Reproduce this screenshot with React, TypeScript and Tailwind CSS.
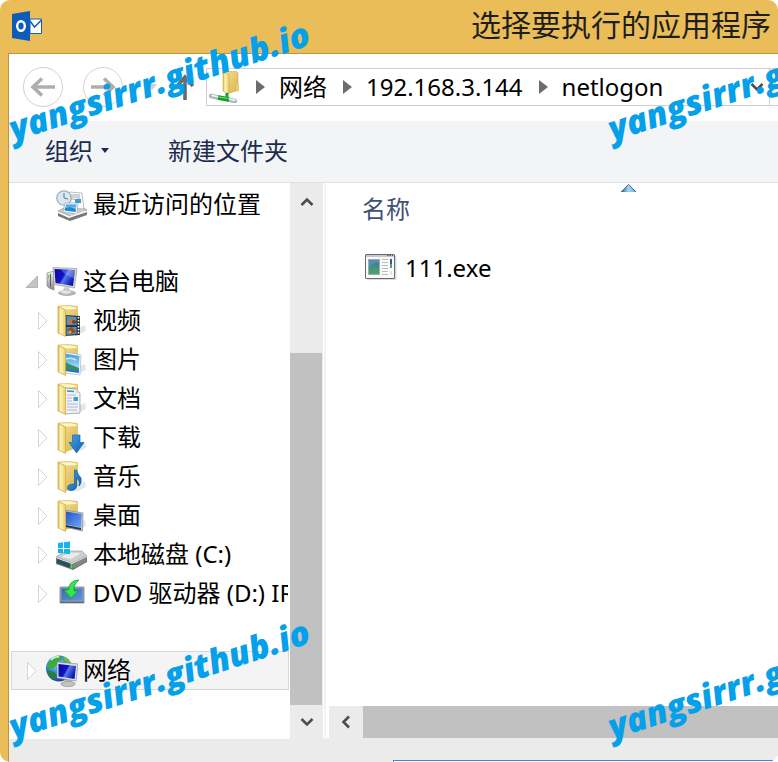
import type { ReactNode } from "react";

const uiFont = "font-['Noto_Sans','Noto_Sans_CJK_SC',sans-serif]";

function Gradients() {
  return (
    <svg width="0" height="0" className="absolute" aria-hidden="true">
      <defs>
        <linearGradient id="flap" x1="0" y1="0" x2="1" y2="0">
          <stop offset="0" stopColor="#dcb548" />
          <stop offset="0.35" stopColor="#fdf3b8" />
          <stop offset="1" stopColor="#ecce6c" />
        </linearGradient>
        <linearGradient id="back" x1="0" y1="0" x2="1" y2="1">
          <stop offset="0" stopColor="#f4e294" />
          <stop offset="1" stopColor="#d9b34c" />
        </linearGradient>
        <linearGradient id="screen" x1="0" y1="0" x2="1" y2="0.5">
          <stop offset="0" stopColor="#0a0a9c" />
          <stop offset="0.5" stopColor="#1212c8" />
          <stop offset="0.6" stopColor="#5878e8" />
          <stop offset="1" stopColor="#0a18b4" />
        </linearGradient>
        <linearGradient id="metal" x1="0" y1="0" x2="0" y2="1">
          <stop offset="0" stopColor="#f4f4f4" />
          <stop offset="1" stopColor="#8d8d8d" />
        </linearGradient>
        <linearGradient id="sky" x1="0" y1="0" x2="0" y2="1">
          <stop offset="0" stopColor="#3d9be0" />
          <stop offset="1" stopColor="#d5effb" />
        </linearGradient>
        <linearGradient id="blue" x1="0" y1="0" x2="1" y2="1">
          <stop offset="0" stopColor="#49a5e6" />
          <stop offset="1" stopColor="#0b5cae" />
        </linearGradient>
        <linearGradient id="desk" x1="0" y1="0" x2="1" y2="1">
          <stop offset="0" stopColor="#2553c4" />
          <stop offset="1" stopColor="#6ea6f4" />
        </linearGradient>
        <linearGradient id="plate" x1="0" y1="0" x2="1" y2="1">
          <stop offset="0" stopColor="#3a6aa8" />
          <stop offset="1" stopColor="#5f97de" />
        </linearGradient>
        <linearGradient id="app" x1="0" y1="0" x2="0" y2="1">
          <stop offset="0" stopColor="#3d72a8" />
          <stop offset="1" stopColor="#4caa5c" />
        </linearGradient>
        <linearGradient id="sort" x1="0" y1="0" x2="1" y2="0">
          <stop offset="0" stopColor="#2c5f8c" />
          <stop offset="0.5" stopColor="#9fd4f4" />
          <stop offset="1" stopColor="#6ea8cf" />
        </linearGradient>
        <radialGradient id="globe" cx="0.4" cy="0.3" r="0.75">
          <stop offset="0" stopColor="#8fe0ff" />
          <stop offset="0.5" stopColor="#2b83d6" />
          <stop offset="1" stopColor="#14408e" />
        </radialGradient>
      </defs>
    </svg>
  );
}

function Icon({ children }: { children: ReactNode }) {
  return (
    <svg width="32" height="32" viewBox="0 0 32 32" className="shrink-0" aria-hidden="true">
      {children}
    </svg>
  );
}

function Folder({ children }: { children?: ReactNode }) {
  return (
    <Icon>
      <path d="M20 31L30 26L29 20L20 24Z" fill="#000" opacity="0.1" />
      <path d="M2 1L12 0.500L21.500 1.500V25L9 30Z" fill="url(#back)" stroke="#d9bc62" strokeWidth="0.7" />
      <path d="M4 1.500L13 1.300L20.500 2.500V4L10 4.500Z" fill="#fff8c8" />
      {children}
      <path d="M2 1.500L9.500 5V31.500L2 28Z" fill="url(#flap)" stroke="#d3ab45" strokeWidth="0.7" />
    </Icon>
  );
}

function Monitor() {
  return (
    <>
      <ellipse cx="21" cy="27" rx="9" ry="3" fill="#b5b5b5" />
      <path d="M18 20H23L24 27H17Z" fill="url(#metal)" />
      <ellipse cx="20" cy="26" rx="5" ry="1.700" fill="#e4e4e4" />
      <path d="M7 1.500L31 2.500L28.500 22L8 18.500Z" fill="#d8d8d8" stroke="#8d8d8d" strokeWidth="0.6" />
      <path d="M8.500 3L29 4L27 20L9.500 17Z" fill="url(#screen)" />
      <path d="M15 3.500L29 4L28 12Q20 11 15 3.500Z" fill="#b4c8ff" opacity="0.35" />
    </>
  );
}

const icons: Record<string, ReactNode> = {
  recent: (
    <Icon>
      <path d="M2 24L13 29L31 23V26L14 32L2 27Z" fill="#777" />
      <path d="M2 22L14 27L31 21L24 17L8 19Z" fill="#cfcfcf" stroke="#8c8c8c" strokeWidth="0.6" />
      <path d="M13 3L26 4L28 20L14 19Z" fill="#fafafa" stroke="#9ca6ae" strokeWidth="0.7" />
      <path d="M15 6H24M15 8H24M15 10H19M21 10H24" stroke="#8d9aa5" strokeWidth="0.8" />
      <rect x="19" y="10" width="6" height="4" fill="#3a9bd0" />
      <circle cx="8" cy="9" r="7.200" fill="#d8e7f0" stroke="#9eb2bf" strokeWidth="1.300" />
      <path d="M8 4V9L12 10" stroke="#617684" strokeWidth="1" fill="none" />
      <path d="M9 14L22 14L21 25L7 23Z" fill="#f5f9fc" stroke="#8ba1b0" strokeWidth="0.6" />
      <path d="M10 15.500L20.500 15.500L19.500 23L8.500 21.500Z" fill="url(#sky)" />
      <path d="M9 19L14 18L20 20L19.500 23L8.500 21.500Z" fill="#1d8ad1" />
      <path d="M12 28L29 22" stroke="#eee" strokeWidth="1" />
    </Icon>
  ),
  pc: (
    <Icon>
      <path d="M1 7L8 5V24L3 22L1 20Z" fill="url(#metal)" stroke="#777" strokeWidth="0.6" />
      <path d="M2.500 9V12" stroke="#47e034" strokeWidth="1.300" />
      <path d="M4.500 8V21" stroke="#5e5e5e" />
      <Monitor />
    </Icon>
  ),
  video: (
    <Folder>
      <path d="M9 10L24 11V30L9 31Z" fill="#34332f" />
      <path d="M10.500 11L20.500 12V20L10.500 20Z" fill="#3e9acb" />
      <path d="M10.500 22H20.500V29L10.500 30Z" fill="#3e9acb" />
      <circle cx="15" cy="16" r="2.500" fill="#e36a2c" />
      <circle cx="18" cy="17" r="2" fill="#77402a" />
      <path d="M11 24L16 22L20 27L14 29Z" fill="#a5452a" />
      <circle cx="14" cy="27" r="1.500" fill="#e5a52f" />
      <path d="M22.500 12V30" stroke="#fff" strokeWidth="1.500" strokeDasharray="1.500 1.500" />
    </Folder>
  ),
  picture: (
    <Folder>
      <path d="M9 8L25 11L24 31L9 29Z" fill="#fff" stroke="#a5b6c2" strokeWidth="0.7" />
      <path d="M9 9.500L23.500 12L23 29L9 27Z" fill="url(#sky)" />
      <path d="M9 18Q15 21 23 24L23 26L9 27Z" fill="#3c8b6e" />
      <path d="M9 25L23 26V29L9 27Z" fill="#2379b0" />
      <path d="M10 15Q15 13 20 16" stroke="#fff" strokeWidth="1.500" fill="none" opacity="0.7" />
    </Folder>
  ),
  document: (
    <Folder>
      <path d="M9 5L20 6L24 10V30L9 31Z" fill="#f0f1f9" stroke="#8b9099" strokeWidth="0.7" />
      <path d="M20 6V10L24 10Z" fill="#d2d8e2" />
      <path d="M11 8L18 8.500" stroke="#3b9a95" strokeWidth="1.500" />
      <path d="M11 12H20M11 15H16M11 18H16M11 21H22M11 24H22M11 27H21" stroke="#b4b9c9" />
      <rect x="17.500" y="14" width="4.500" height="4" fill="#37a0cf" />
    </Folder>
  ),
  download: (
    <Folder>
      <path d="M16.500 13H24V20.500H28L20.500 31L13 20.500H16.500Z" fill="url(#blue)" stroke="#1b68b4" strokeWidth="0.7" />
    </Folder>
  ),
  music: (
    <Folder>
      <path d="M18.500 9H20.500Q22 14 25 17Q26 22 23 25Q24 19 20.500 17V25Q20.500 29 16 29.500Q11.500 30 11.500 26.500Q12 23 18.500 23Z" fill="url(#blue)" stroke="#155b9e" strokeWidth="0.7" />
    </Folder>
  ),
  desktop: (
    <Folder>
      <path d="M9 10L27 13L26.500 31L9 27Z" fill="#bfc9d5" stroke="#7e8999" strokeWidth="0.7" />
      <path d="M10 11.500L25.500 14L25 27.500L10 24.500Z" fill="url(#desk)" />
      <path d="M10 25L25 28V30L10 27Z" fill="#263653" />
    </Folder>
  ),
  disk: (
    <Icon>
      <path d="M0 19L16 25L31 18V23L17 31L0 25Z" fill="#6d7476" />
      <path d="M0 18L10 12L26 12L31 17L16 24Z" fill="#cdcdcd" stroke="#969696" strokeWidth="0.6" />
      <path d="M5 18L13 13.500L25 14L15 20Z" fill="#ebebeb" />
      <path d="M1 20L14 24.500V29L1 24Z" fill="#25515a" />
      <path d="M17 25L30 18.500V22.500L18 29.500Z" fill="#858585" />
      <path d="M15.500 25V29.500" stroke="#3fe02c" strokeWidth="1.800" />
      <path d="M2 4L7 3.300V9H2ZM8 3.200L14 2.500V9H8ZM2 10H7V14.500L2 14ZM8 10H14V15.300L8 14.600Z" fill="#14b5ee" />
    </Icon>
  ),
  dvd: (
    <Icon>
      <path d="M4 9H28V25H4Z" fill="#93a2b2" stroke="#7d8897" strokeWidth="0.8" />
      <path d="M5.500 10.500H26.500V22.500H5.500Z" fill="url(#plate)" />
      <path d="M4 23.500H28V25H4Z" fill="#5c7085" />
      <path d="M23 2Q13 2 12.500 12H8L15 20L22 13H18Q17 7 23 2Z" fill="#31e84b" stroke="#149e2a" strokeWidth="0.8" />
    </Icon>
  ),
  network: (
    <Icon>
      <circle cx="13" cy="13.500" r="13" fill="url(#globe)" />
      <path d="M3 7Q8 0 15 1Q18 5 12 7Q10 13 5 14Q1 14 1 11Z" fill="#3daa3b" />
      <path d="M17 1Q24 4 25 9Q18 9 17 1Z" fill="#62c046" />
      <path d="M1 16Q7 15 10 20Q10 25 7 24Q3 22 1 16Z" fill="#277e34" />
      <path d="M5 5Q9 1 13 2" stroke="#ddffd4" strokeWidth="1.500" fill="none" />
      <path d="M19 23H25L26 29H18Z" fill="#bcbcbc" />
      <ellipse cx="22" cy="29" rx="7" ry="2.700" fill="#c2c2c2" stroke="#8a8a8a" strokeWidth="0.6" />
      <path d="M11 7L32 9L30 26L11 23Z" fill="#e0e0e0" stroke="#818181" strokeWidth="0.6" />
      <path d="M12.500 9L30 11L28.500 24L12.500 21.500Z" fill="url(#screen)" />
    </Icon>
  ),
};

function OutlookIcon() {
  return (
    <svg width="32" height="32" viewBox="0 0 32 32" aria-hidden="true">
      <path d="M18 8H29.500V22.500H18Z" fill="#fff" stroke="#1260b8" />
      <path d="M18 10L22.500 16L29.500 9" stroke="#1260b8" strokeWidth="1.500" fill="none" />
      <path d="M0 3L18 0V30L0 27Z" fill="#0c5cb8" />
      <ellipse cx="9" cy="15" rx="3.800" ry="4.800" fill="none" stroke="#fff" strokeWidth="2.400" />
    </svg>
  );
}

function ShareIcon() {
  return (
    <svg width="32" height="32" viewBox="0 0 32 32" className="shrink-0" aria-hidden="true">
      <path d="M15 1L27 0L29 2V19L21 22L15 19Z" fill="url(#back)" stroke="#cda94a" strokeWidth="0.6" />
      <path d="M14 1L20 4V23L14 20Z" fill="url(#flap)" stroke="#cda94a" strokeWidth="0.6" />
      <path d="M27 13H30V20L27 21Z" fill="#e8ca70" />
      <path d="M18 22V27" stroke="#1c9d31" strokeWidth="3" />
      <path d="M2 25L26 30" stroke="#aab9b9" strokeWidth="4.500" strokeLinecap="round" />
      <path d="M3 24.500L26 29.200" stroke="#f4fafa" strokeWidth="1.500" strokeLinecap="round" />
      <path d="M9 26.500L20 28.500" stroke="#139e2b" strokeWidth="4.500" />
      <path d="M9 26L20 27.500" stroke="#67e46d" strokeWidth="1.200" />
    </svg>
  );
}

function ExeIcon() {
  return (
    <svg width="32" height="28" viewBox="0 0 32 28" aria-hidden="true">
      <rect x="2" y="2" width="29.500" height="24" rx="1" fill="#dcdcdc" />
      <rect x="0.500" y="0.500" width="29" height="24" rx="0.500" fill="#fafafa" stroke="#646b73" />
      <path d="M1 1H29V3H1Z" fill="#c3c8d2" />
      <path d="M22 1.500H28" stroke="#586173" strokeDasharray="1.500 1" />
      <rect x="3.500" y="5.500" width="11" height="15" fill="url(#app)" stroke="#a1a9b8" />
      <path d="M4 13Q6 9 14 8.500V6H4Z" fill="#6094bd" opacity="0.7" />
      <path d="M17 5.500H23M17 8.500H23M17 11.500H23M17 14.500H23M17 17.500H23M17 20.500H23" stroke="#bcbcbc" />
      <path d="M25 5H27V10H25Z" fill="#315b9c" />
      <path d="M25 10H27V14H25Z" fill="#4caa5c" />
      <path d="M25 17H27V21H25Z" fill="#e2e2e2" />
    </svg>
  );
}

function Chevron({ dir }: { dir: "up" | "down" | "left" }) {
  const paths = {
    up: "M1.500 10L7 4.500L12.500 10",
    down: "M1.500 4L7 9.500L12.500 4",
    left: "M10 1.500L4.500 7L10 12.500",
  };
  return (
    <svg width="14" height="14" viewBox="0 0 14 14" aria-hidden="true">
      <path d={paths[dir]} fill="none" stroke="#4d4d4d" strokeWidth="2.600" />
    </svg>
  );
}

function Crumb({ children }: { children: ReactNode }) {
  return (
    <>
      <svg width="9" height="14" viewBox="0 0 9 14" className="shrink-0" aria-hidden="true">
        <path d="M0 0L9 7L0 14Z" fill="#6d6d6d" />
      </svg>
      <button className="mr-4 ml-[14px] whitespace-nowrap">{children}</button>
    </>
  );
}

function RoundArrow({ label, flip }: { label: string; flip?: boolean }) {
  return (
    <button aria-label={label} className="flex size-10 shrink-0 items-center justify-center rounded-full border border-[#d2d2d2]">
      <svg width="26" height="20" viewBox="0 0 26 20" className={flip ? "-scale-x-100" : ""} aria-hidden="true">
        <path d="M25 10H3M12 1.500L3 10L12 18.500" fill="none" stroke="#aeaeae" strokeWidth="3.600" />
      </svg>
    </button>
  );
}

type Node = { icon: string; label: string; level: 1 | 2; state: "open" | "closed" | "none"; selected?: boolean };

const groups: Node[][] = [
  [{ icon: "recent", label: "最近访问的位置", level: 2, state: "none" }],
  [
    { icon: "pc", label: "这台电脑", level: 1, state: "open" },
    { icon: "video", label: "视频", level: 2, state: "closed" },
    { icon: "picture", label: "图片", level: 2, state: "closed" },
    { icon: "document", label: "文档", level: 2, state: "closed" },
    { icon: "download", label: "下载", level: 2, state: "closed" },
    { icon: "music", label: "音乐", level: 2, state: "closed" },
    { icon: "desktop", label: "桌面", level: 2, state: "closed" },
    { icon: "disk", label: "本地磁盘 (C:)", level: 2, state: "closed" },
    { icon: "dvd", label: "DVD 驱动器 (D:) IR5_SSS", level: 2, state: "closed" },
  ],
  [{ icon: "network", label: "网络", level: 1, state: "closed", selected: true }],
];

function TreeRow({ node }: { node: Node }) {
  return (
    <li>
      <button
        className={`flex h-[39px] w-full items-center overflow-hidden border text-left ${
          node.selected ? "border-[#d6d6d6] bg-[#f4f4f4]" : "border-transparent"
        } ${node.level === 1 ? "pl-[14px]" : "pl-[25px]"}`}
      >
        <svg width="12" height="20" viewBox="0 0 12 20" className="shrink-0" aria-hidden="true">
          {node.state === "open" && <path d="M11.500 4V15.500H0Z" fill="#c4c4c4" stroke="#a9a9a9" strokeWidth="0.8" />}
          {node.state === "closed" && <path d="M1.500 1.500L10 10L1.500 18.500Z" fill="#fff" stroke="#d5d5d5" />}
        </svg>
        <span className={`flex shrink-0 ${node.level === 1 ? "mr-[5px] ml-2" : "mr-[5px] ml-[7px]"}`}>{icons[node.icon]}</span>
        <span className="pb-[2px] whitespace-nowrap">{node.label}</span>
      </button>
    </li>
  );
}

function Watermark({ place }: { place: string }) {
  return (
    <span
      className={`pointer-events-none absolute origin-bottom-left -rotate-[18deg] whitespace-nowrap font-['Open_Sans',sans-serif] text-[34px] leading-10 font-extrabold text-[#04a0e9] italic ${place}`}
    >
      yangsirrr.github.io
    </span>
  );
}

export default function App() {
  return (
    <div className={`relative h-screen overflow-hidden bg-white text-2xl leading-8 text-black ${uiFont}`}>
      <Gradients />
      <div className="flex h-full flex-col overflow-hidden rounded-[10px] bg-[#eabd59]">
        <header className="flex h-[53px] shrink-0 items-center justify-between pr-[7px] pl-3">
          <OutlookIcon />
          <h1 className="pb-1 text-[30px] leading-10 whitespace-nowrap text-[#1f1f1f]">选择要执行的应用程序</h1>
        </header>

        <main className="ml-2 flex min-h-0 flex-1 flex-col border-t border-l border-[#b99545] bg-white">
          <nav className="flex h-[67px] shrink-0 items-center pb-[2px] pl-[14px]">
            <RoundArrow label="后退" />
            <div className="w-5 shrink-0" />
            <RoundArrow label="前进" flip />
            <button aria-label="最近的位置" className="ml-6 shrink-0">
              <svg width="10" height="6" viewBox="0 0 10 6" aria-hidden="true">
                <path d="M0 0H10L5 6Z" fill="#cfcfcf" />
              </svg>
            </button>
            <button aria-label="上移" className="mr-3 ml-[19px] shrink-0">
              <svg width="18" height="26" viewBox="0 0 18 26" aria-hidden="true">
                <path d="M9 26V3M1 12L9 3L17 12" fill="none" stroke="#6b6b6b" strokeWidth="3.600" />
              </svg>
            </button>
            <div className="flex h-[38px] min-w-0 flex-1 items-center border border-r-0 border-[#cfcfcf] pl-[2px]">
              <ShareIcon />
              <div className="w-[15px] shrink-0" />
              <Crumb>网络</Crumb>
              <Crumb>192.168.3.144</Crumb>
              <Crumb>netlogon</Crumb>
              <button aria-label="历史记录" className="mr-[5px] ml-auto flex shrink-0">
                <Chevron dir="down" />
              </button>
              <button aria-label="刷新" className="h-full w-[9px] shrink-0 border-l border-[#cfcfcf]" />
            </div>
          </nav>

          <div className="flex h-[62px] shrink-0 items-center gap-[59px] border-b border-[#dfe1e5] bg-[#f2f4f6] pb-[2px] pl-9 text-[#1c2c4e]">
            <button className="flex items-center gap-2">
              组织
              <svg width="8" height="5" viewBox="0 0 8 5" aria-hidden="true">
                <path d="M0 0H8L4 5Z" fill="#1c2c4e" />
              </svg>
            </button>
            <button>新建文件夹</button>
          </div>

          <div className="flex min-h-0 flex-1">
            <aside className="w-[281px] shrink-0 overflow-hidden pt-[2px] pr-px pl-[2px]">
              <div className="flex flex-col gap-[38px]">
                {groups.map((group) => (
                  <ul key={group[0].label}>
                    {group.map((node) => (
                      <TreeRow key={node.label} node={node} />
                    ))}
                  </ul>
                ))}
              </div>
            </aside>
            <div className="flex w-[33px] shrink-0 flex-col bg-[#ebebeb]">
              <button aria-label="向上滚动" className="flex h-[170px] shrink-0 justify-center pt-3">
                <Chevron dir="up" />
              </button>
              <div className="mr-px flex-1 bg-[#c1c1c1]" />
              <button aria-label="向下滚动" className="flex h-[34px] shrink-0 items-center justify-center">
                <Chevron dir="down" />
              </button>
            </div>
            <div className="w-[3px] shrink-0 border-l border-white bg-[#f3f3f3]" />
            <section className="flex min-w-0 flex-1 flex-col">
              <div className="min-h-0 flex-1 pl-9">
                <div className="flex pt-px pl-[259px]">
                  <svg width="15" height="8" viewBox="0 0 15 8" aria-hidden="true">
                    <path d="M0 8L7.500 0L15 8Z" fill="url(#sort)" />
                    <path d="M0 8L7.500 0.500L15 8" fill="none" stroke="#3e6e96" />
                  </svg>
                </div>
                <table className="w-full text-left">
                  <thead>
                    <tr>
                      <th className="h-[34px] p-0 font-normal text-[#3f5275]">名称</th>
                    </tr>
                  </thead>
                  <tbody>
                    <tr>
                      <td className="p-0 pt-[26px]">
                        <button className="flex items-center gap-2 pl-[3px]">
                          <ExeIcon />
                          111.exe
                        </button>
                      </td>
                    </tr>
                  </tbody>
                </table>
              </div>
              <div className="flex h-[33px] shrink-0 border-b border-[#ebebeb] pl-[3px]">
                <button aria-label="向左滚动" className="flex w-[34px] shrink-0 items-center justify-center bg-[#ebebeb]">
                  <Chevron dir="left" />
                </button>
                <div className="flex-1 bg-[#c1c1c1]" />
              </div>
            </section>
          </div>

          <footer className="h-[23px] shrink-0 overflow-hidden bg-[#ebebeb] pt-[21px] pr-[5px] pl-96">
            <input aria-label="文件名" className="block h-9 w-full border border-[#3c86dc] bg-white px-2" />
          </footer>
        </main>
      </div>
      <Watermark place="top-[108px] left-4" />
      <Watermark place="top-[108px] left-[615px]" />
      <Watermark place="top-[706px] left-4" />
      <Watermark place="top-[706px] left-[615px]" />
    </div>
  );
}
